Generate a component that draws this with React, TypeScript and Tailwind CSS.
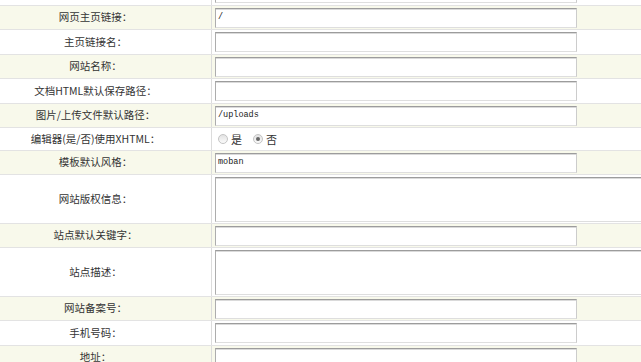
const rows: { label: string; h: string; kind: "input" | "area" | "radio"; value?: string; cream: boolean }[] = [
  { label: "", h: "h-[25px]", kind: "input", cream: false },
  { label: "网页主页链接：", h: "h-[24px]", kind: "input", value: "/", cream: true },
  { label: "主页链接名：", h: "h-[25px]", kind: "input", cream: false },
  { label: "网站名称：", h: "h-[24px]", kind: "input", cream: true },
  { label: "文档HTML默认保存路径：", h: "h-[25px]", kind: "input", cream: false },
  { label: "图片/上传文件默认路径：", h: "h-[24px]", kind: "input", value: "/uploads", cream: true },
  { label: "编辑器(是/否)使用XHTML：", h: "h-[23px]", kind: "radio", cream: false },
  { label: "模板默认风格：", h: "h-[24px]", kind: "input", value: "moban", cream: true },
  { label: "网站版权信息：", h: "h-[49px]", kind: "area", cream: false },
  { label: "站点默认关键字：", h: "h-[24px]", kind: "input", cream: true },
  { label: "站点描述：", h: "h-[49px]", kind: "area", cream: false },
  { label: "网站备案号：", h: "h-[24px]", kind: "input", cream: true },
  { label: "手机号码：", h: "h-[25px]", kind: "input", cream: false },
  { label: "地址：", h: "h-[24px]", kind: "input", cream: true },
];

const fieldBorder =
  "border border-t-[#9c9c9c] border-l-[#adadad] border-b-[#dedede] border-r-[#cccccc] shadow-[inset_0_1px_0_#dadada] bg-white";

function Radio({ checked }: { checked?: boolean }) {
  return (
    <span className="flex h-[10px] w-[10px] items-center justify-center rounded-full border border-[#c4c4c4] bg-gradient-to-b from-[#e2e2e2] to-[#fbfbfb]">
      {checked && <span className="h-[4px] w-[4px] rounded-full bg-[#666]" />}
    </span>
  );
}

export default function App() {
  return (
    <div
      className="h-[362px] w-[641px] overflow-hidden bg-white text-[#333]"
      style={{ fontFamily: '"Noto Sans CJK SC", "Noto Sans", sans-serif' }}
    >
      <div className="-mt-[19px]">
        {rows.map((row, i) => (
          <div
            key={i}
            className={`flex border-b border-[#e3e3e3] ${row.h} ${row.cream ? "bg-[#f8f9eb]" : "bg-white"}`}
          >
            <div className="flex w-[212px] shrink-0 items-center justify-center border-r border-[#dcdcdc] pr-[20px] text-[10.5px] leading-none">
              {row.label}
            </div>
            <div className="flex min-w-0 flex-1 items-center pl-[3px]">
              {row.kind === "input" && (
                <div
                  className={`flex h-[20px] w-[362px] shrink-0 items-center px-[2px] text-[8.5px] text-[#222] ${fieldBorder}`}
                  style={{ fontFamily: '"Liberation Mono", monospace' }}
                >
                  {row.value}
                </div>
              )}
              {row.kind === "area" && (
                <div className={`h-[45px] w-[500px] shrink-0 ${fieldBorder}`} />
              )}
              {row.kind === "radio" && (
                <div className="flex items-center text-[11px] leading-none">
                  <span className="ml-[3px]">
                    <Radio />
                  </span>
                  <span className="ml-[3px]">是</span>
                  <span className="ml-[11px]">
                    <Radio checked />
                  </span>
                  <span className="ml-[3px]">否</span>
                </div>
              )}
            </div>
          </div>
        ))}
      </div>
    </div>
  );
}
